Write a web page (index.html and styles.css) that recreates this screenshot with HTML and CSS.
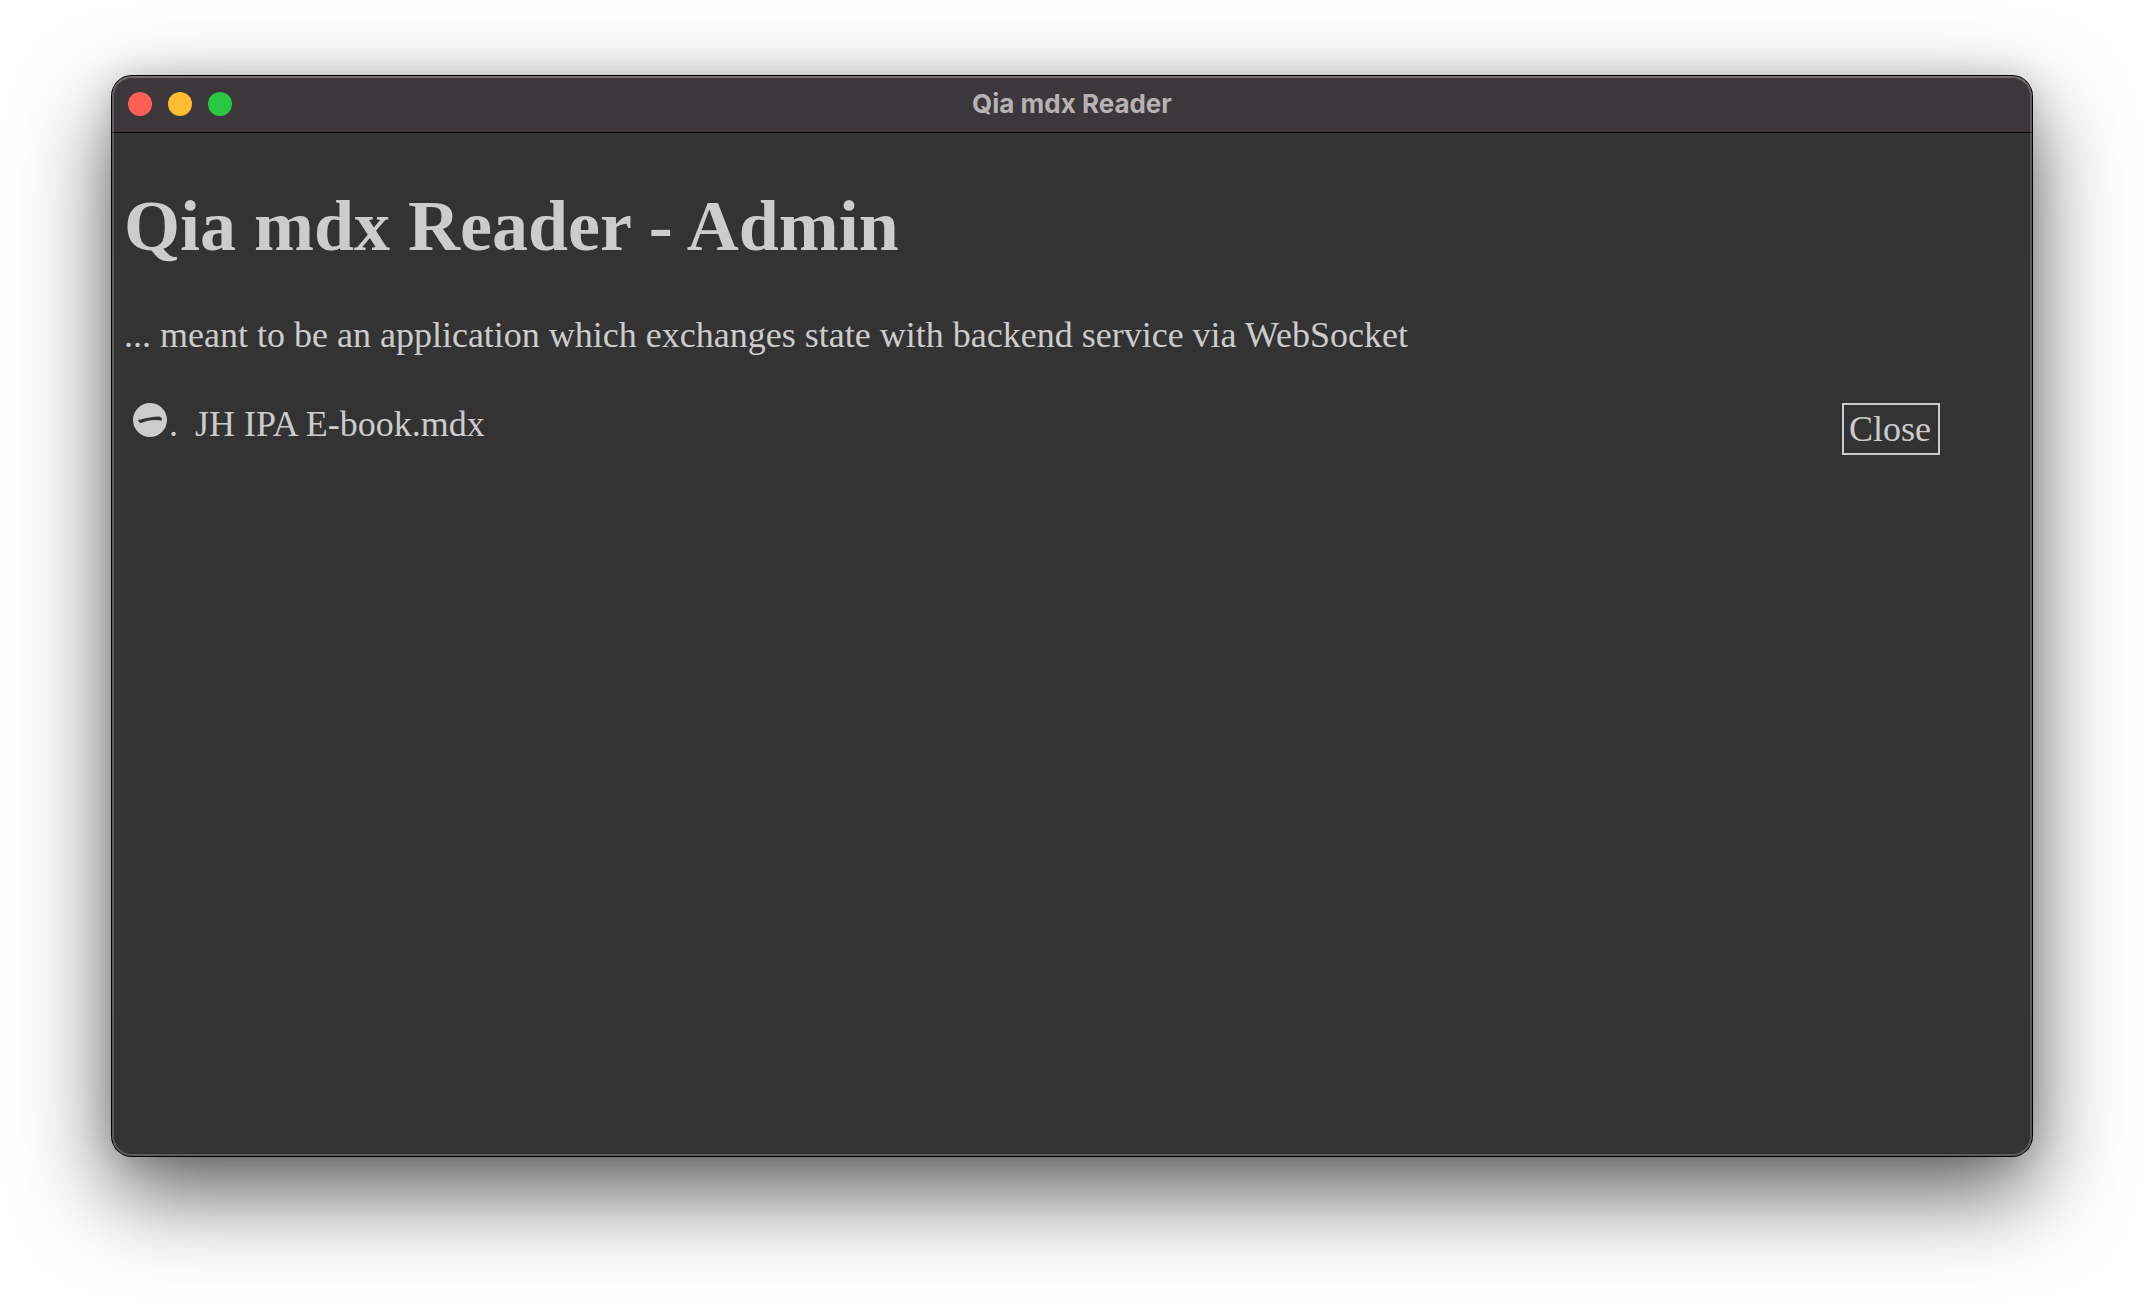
FILE: index.html
```html
<!DOCTYPE html>
<html lang="en">
<head>
<meta charset="utf-8">
<title>Qia mdx Reader</title>
<link rel="stylesheet" href="styles.css">
</head>
<body>
<div class="window">
  <header class="titlebar">
    <div class="controls">
      <button class="control control-close" type="button" aria-label="Close window"></button>
      <button class="control control-minimize" type="button" aria-label="Minimize window"></button>
      <button class="control control-zoom" type="button" aria-label="Zoom window"></button>
    </div>
    <div class="window-title">Qia mdx Reader</div>
  </header>
  <main class="content">
    <h1 class="heading">Qia mdx Reader - Admin</h1>
    <p class="intro">... meant to be an application which exchanges state with backend service via WebSocket</p>
    <ul class="books">
      <li class="book">
        <span class="marker"><svg class="marker-icon" viewBox="0 0 34 34" aria-hidden="true"><circle cx="17" cy="17" r="17" fill="#ccc"/><path d="M5 16.500C6.500 17 8 16.500 10 15.800C15 14.700 21 13.600 26 13.500C28 13.600 29.300 15.500 29 17.500C22 16.200 14 17.300 8.500 19.800C6.500 20.500 5 18 5 16.500Z" fill="#333"/></svg>.</span>
        <span class="book-name">JH IPA E-book.mdx</span>
        <button class="book-close" type="button">Close</button>
      </li>
    </ul>
  </main>
</div>
</body>
</html>
```
FILE: styles.css
```css
* {
  box-sizing: border-box;
}

body {
  margin: 0;
  min-height: 100vh;
  padding: 76px 112px 148px;
  display: flex;
  background: #fff;
}

.window {
  position: relative;
  flex: 1;
  display: flex;
  flex-direction: column;
  border-radius: 20px;
  background: #333;
  box-shadow: 0 0 0 1px #000, 0 0 30px rgba(0, 0, 0, 0.15), 0 36px 90px rgba(0, 0, 0, 0.64);
}

/* Light rim that runs just inside the window edge */
.window::after {
  content: "";
  position: absolute;
  inset: 0;
  border: 2px solid rgba(255, 255, 255, 0.2);
  border-top-color: rgba(255, 255, 255, 0.28);
  border-radius: 20px;
  pointer-events: none;
}

.titlebar {
  display: grid;
  grid-template-columns: 1fr auto 1fr;
  align-items: center;
  height: 57px;
  padding: 0 16px;
  border-bottom: 1px solid #000;
  border-radius: 20px 20px 0 0;
  background: #3c373b;
}

.controls {
  display: flex;
  gap: 16px;
}

.control {
  width: 24px;
  height: 24px;
  padding: 0;
  border: 0;
  border-radius: 50%;
}

.control-close {
  background: #ff5f57;
}

.control-minimize {
  background: #febc2e;
}

.control-zoom {
  background: #28c840;
}

.window-title {
  color: #b5b2b4;
  font: 700 26px/32px Inter, sans-serif;
}

.content {
  padding: 50px 12px;
  color: #ccc;
  font: 36px/40px "Liberation Serif", serif;
}

.heading {
  margin: 0 0 46px;
  font-size: 72px;
  line-height: 86px;
}

.intro {
  margin: 0 0 48px;
}

.books {
  margin: 0;
  padding: 0 80px 0 9px;
  list-style: none;
}

.book {
  display: flex;
  align-items: flex-start;
  line-height: 42px;
}

.marker {
  display: flex;
  gap: 2px;
  width: 62px;
}

.marker-icon {
  width: 34px;
  height: 34px;
}

.book-name {
  flex: 1;
}

.book-close {
  padding: 3px 7px 3px 5px;
  border: 2px solid #ccc;
  border-radius: 0;
  background: transparent;
  color: inherit;
  font: inherit;
}
```
